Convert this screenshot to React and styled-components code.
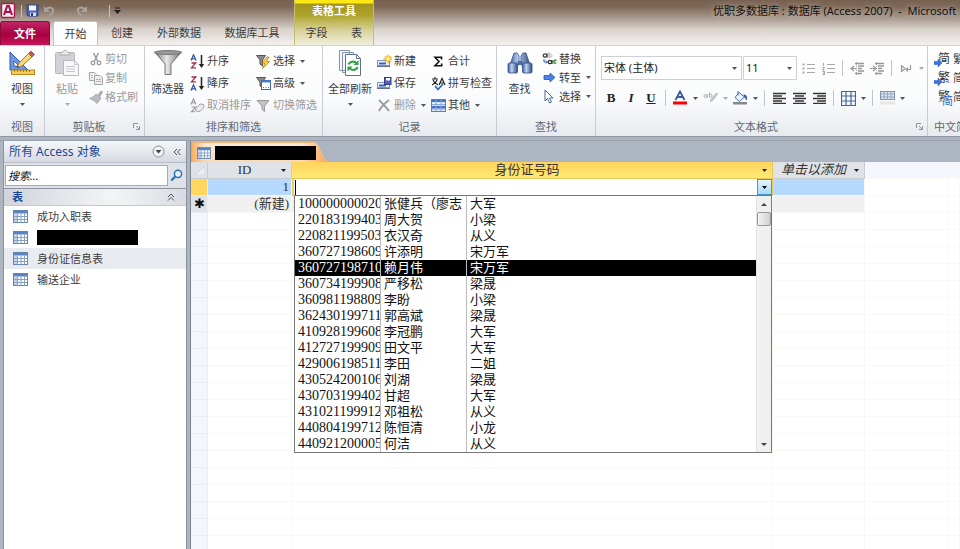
import React, { useState } from 'react';
import styled, { createGlobalStyle, css } from 'styled-components';

const uiFont = '"Noto Sans", "Noto Sans CJK SC", sans-serif';
const sheetFont = '"Liberation Serif", "Noto Sans CJK SC", serif';

const people = [
  ['100000000020', '张健兵（廖志', '大军'],
  ['220183199403', '周大贺', '小梁'],
  ['220821199503', '衣汉奇', '从义'],
  ['360727198609', '许添明', '宋万军'],
  ['360727198710', '赖月伟', '宋万军'],
  ['360734199908', '严移松', '梁晟'],
  ['360981198809', '李盼', '小梁'],
  ['362430199711', '郭高斌', '梁晟'],
  ['410928199608', '李冠鹏', '大军'],
  ['412727199909', '田文平', '大军'],
  ['429006198511', '李田', '二姐'],
  ['430524200106', '刘湖', '梁晟'],
  ['430703199402', '甘超', '大军'],
  ['431021199912', '邓祖松', '从义'],
  ['440804199712', '陈恒清', '小龙'],
  ['440921200005', '何洁', '从义'],
];

const tables = ['成功入职表', null, '身份证信息表', '输送企业'];
const emptyRows = Array.from({ length: 40 }, (_, i) => i);

/* ---------- icons ---------- */

const Icon = ({ w = 16, h = 16, box, children }) => (
  <svg width={w} height={h} viewBox={box || `0 0 ${w} ${h}`} fill="none" aria-hidden="true">
    {children}
  </svg>
);

const AccessLogo = () => (
  <Icon w={17} h={17}>
    <rect x="1.5" y="1.5" width="13" height="14" rx="1" fill="#fbe9f0" stroke="#a8194d" strokeWidth="1.4" />
    <path d="M4 13L7.2 4h1.6L12 13M5.4 10h5.2" stroke="#a30f43" strokeWidth="2" />
  </Icon>
);

const SaveIcon = () => (
  <Icon w={13} h={13}>
    <path d="M1 1h11v11H2l-1-1z" fill="#4763b8" stroke="#2d4590" />
    <rect x="3" y="1.5" width="7" height="5" fill="#f2f6ff" />
    <rect x="4" y="8.5" width="6" height="3.5" fill="#d2dbef" />
    <path d="M5 9h2v3H5z" fill="#2c3c72" />
  </Icon>
);

const UndoIcon = ({ flip }) => (
  <Icon w={12} h={12}>
    <g transform={flip ? 'translate(12 0) scale(-1 1)' : undefined}>
      <path d="M3 4.500c4-3.600 8-1.400 7 2-.4 1.600-2 3-3.500 4" stroke="#aaa29c" strokeWidth="2" />
      <path d="M1 1v6h6z" fill="#aaa29c" />
    </g>
  </Icon>
);

const Arrow = ({ color = '#555' }) => (
  <Icon w={5} h={3}>
    <path d="M0 0h5L2.500 3z" fill={color} />
  </Icon>
);

const QatMore = () => (
  <Icon w={7} h={7}>
    <path d="M1 1h5" stroke="#222" />
    <path d="M0 3h7L3.500 7z" fill="#222" />
  </Icon>
);

const DesignIcon = () => (
  <Icon w={28} h={28}>
    <path d="M2 3v18h18z" fill="#6c97dd" stroke="#2e5ba8" />
    <path d="M6 12v5h5z" fill="#fff" stroke="#2e5ba8" strokeWidth=".8" />
    <rect x="3.500" y="21" width="23" height="4.500" fill="#f3cc5c" stroke="#bb8b22" />
    <path d="M6.500 21v2M9.500 21v2M12.500 21v2M15.500 21v2M18.500 21v2M21.500 21v2" stroke="#8c6714" strokeWidth=".8" />
    <path d="M9 19l2-5L22 3l3.500 3.500L14 17z" fill="#f6d979" stroke="#a77a28" />
    <path d="M20.500 4.500L23 2l3.500 3.500-2.500 2.500z" fill="#c9574c" stroke="#666" strokeWidth=".8" />
    <path d="M9 19l.8-2.300 1.500 1.500z" fill="#333" />
  </Icon>
);

const PasteIcon = () => (
  <Icon w={26} h={28}>
    <rect x="1.500" y="3.500" width="19" height="21" rx="1" fill="#d2d2d6" stroke="#b6b6bb" />
    <path d="M6 6V3.500h2.500C9 .7 13 .7 13.500 3.500H16V6z" fill="#ececee" stroke="#aaa" />
    <path d="M9.500 11.500h11l4 4v11h-15z" fill="#f8f8fa" stroke="#b7b7c0" />
    <path d="M20.500 11.500v4h4M12 17.500h9M12 20h9M12 22.500h9" stroke="#c4c4cc" />
  </Icon>
);

const CutIcon = () => (
  <Icon w={14} h={14}>
    <path d="M4.500 1l4 8M9.500 1l-4 8" stroke="#9a9a9e" strokeWidth="1.500" />
    <circle cx="4" cy="11" r="1.800" stroke="#9a9a9e" strokeWidth="1.300" />
    <circle cx="10" cy="11" r="1.800" stroke="#9a9a9e" strokeWidth="1.300" />
  </Icon>
);

const CopyIcon = () => (
  <Icon w={14} h={14}>
    <path d="M.5 1.500h5l2 2v6h-7z" fill="#eee" stroke="#a5a5aa" />
    <path d="M5.500 4.500h5.500l2.500 2.500v6.500h-8z" fill="#eee" stroke="#a5a5aa" />
    <path d="M2 4.500h2M2 6.500h2M7 8.500h5M7 10.500h5" stroke="#b5b5ba" />
  </Icon>
);

const BrushIcon = () => (
  <Icon w={14} h={14}>
    <path d="M9 5l3-4 1.500 1L11 6.500z" fill="#b7b7ba" stroke="#999" strokeWidth=".8" />
    <path d="M7 4l5 4-4 5.500C6 11 3 9.500.5 8.500 3 8 5.500 6 7 4z" fill="#bcbcc0" stroke="#9c9ca0" strokeWidth=".8" />
  </Icon>
);

const FunnelBig = () => (
  <Icon w={30} h={28}>
    <defs>
      <linearGradient id="funnel" x1="0" x2="1">
        <stop offset="0" stopColor="#6f6f6f" />
        <stop offset=".45" stopColor="#e8e8e8" />
        <stop offset="1" stopColor="#6d6d6d" />
      </linearGradient>
    </defs>
    <path d="M1.500 3h27L18 15v10.500h-6V15z" fill="url(#funnel)" stroke="#777" />
    <ellipse cx="15" cy="3.500" rx="13.500" ry="2" fill="#999" stroke="#777" />
  </Icon>
);

const SortIcon = ({ desc }) => (
  <Icon w={15} h={15}>
    <g transform={desc ? 'translate(0 8)' : undefined}>
      <path d="M1 6.500L3.500.8 6 6.500M2 4.800h3" stroke="#3455a4" strokeWidth="1.300" />
    </g>
    <g transform={desc ? 'translate(0 -8)' : undefined}>
      <path d="M1.500 9h4.200L1.500 13.800H6" stroke="#9c3149" strokeWidth="1.300" />
    </g>
    <path d="M11.500 1v10" stroke="#222" strokeWidth="1.500" />
    <path d="M8.800 10h5.400l-2.700 4z" fill="#222" />
  </Icon>
);

const ClearSortIcon = () => (
  <Icon w={15} h={15}>
    <path d="M1 6.500L3.500.8 6 6.500M2 4.800h3M1.500 9h4.200L1.500 13.800H5" stroke="#96969a" strokeWidth="1.100" />
    <path d="M5.500 11l4.500-5 3.500.5.500 2.500-4 4.500-4-.5z" fill="#ededf0" stroke="#a3a3a8" />
  </Icon>
);

const FunnelIcon = ({ kind }) => (
  <Icon w={15} h={15}>
    <path d={kind ? 'M.5 1.500h9L6.500 6v6L4 10V6z' : 'M1 2.500h12L8.500 8v5.500L6 11.500V8z'} fill={kind ? '#8b8b8b' : '#c4c4c7'} stroke={kind ? '#555' : '#9a9a9e'} />
    {kind === 'bolt' && <path d="M11 3L6 9h3l-2.500 5.500L13.500 7.500h-3L13 3z" fill="#ffd34a" stroke="#b98413" strokeWidth=".8" />}
    {kind === 'form' && (
      <>
        <rect x="5.500" y="4.500" width="9" height="9" fill="#fff" stroke="#3b69b5" />
        <path d="M6 5.500h8" stroke="#4a7ed0" strokeWidth="2" />
        <path d="M7 11.500h1M9.500 11.500h1M12 11.500h1" stroke="#3b69b5" />
      </>
    )}
  </Icon>
);

const RefreshIcon = () => (
  <Icon w={26} h={28}>
    <path d="M2.500 1.500h10v20h-10zM5.500 3.500h11v20h-11z" fill="#f5f7fa" stroke="#8494ad" />
    <path d="M8.500 5.500h11l4 4v17h-15z" fill="#fff" stroke="#62718c" />
    <path d="M19.500 5.500v4h4" stroke="#62718c" />
    <path d="M11.500 15.500c1-3 6-4 8-1M20.500 18c-1 3.500-6 4-8 1" stroke="#35a045" strokeWidth="2.200" />
    <path d="M21.500 11v5h-5zM10.500 22.500v-5h5z" fill="#35a045" />
  </Icon>
);

const RecordIcon = ({ kind }) => (
  <Icon w={15} h={15}>
    <rect x=".5" y="6.500" width="12" height="5" fill="#eef4fd" stroke="#8194b5" />
    <path d="M2 9.500h7" stroke="#2d62c0" strokeWidth="2" />
    <path d="M0 12.500h13" stroke="#5f6d86" />
    {kind === 'new' ? (
      <>
        <path d="M11 .5v9M6.500 5h9M8 2l6 6M14 2L8 8" stroke="#efb321" strokeWidth="1.300" />
        <circle cx="11" cy="5" r="1.800" fill="#fff2a0" />
      </>
    ) : (
      <>
        <rect x="7.500" y="1.500" width="6.500" height="7" fill="#5560b5" stroke="#333e8a" />
        <rect x="9" y="2" width="4" height="2.500" fill="#fff" />
      </>
    )}
  </Icon>
);

const DeleteIcon = () => (
  <Icon w={15} h={15}>
    <path d="M2 2c3 3 7 7 10 11M12 2C8 5 4 9 2 13" stroke="#9b9b9b" strokeWidth="1.800" />
  </Icon>
);

const SumIcon = () => (
  <Icon w={15} h={15}>
    <path d="M10.500 5.500V3.200H4l4 4.300-4 4.300h6.700V9.500" stroke="#111" strokeWidth="1.600" />
  </Icon>
);

const SpellIcon = () => (
  <Icon w={15} h={15}>
    <path d="M1 3h6M4 1v2M2 4c1 3 3 4 5 5M6 4C5 7 3 8 1 9" stroke="#222" strokeWidth="1.100" />
    <path d="M8 9l3-6.500L14 9M9 7h4" stroke="#222" strokeWidth="1.200" />
    <path d="M4 10l3 3.500 5-5.500" stroke="#3265c4" strokeWidth="1.800" />
  </Icon>
);

const GridIcon = ({ w = 15, h = 13 }) => (
  <Icon w={w} h={h} box="0 0 15 13">
    <rect x=".5" y=".5" width="14" height="12" fill="#fff" stroke="#6682ae" />
    <path d="M1 1h13v2.500H1z" fill="#5a83c6" />
    <path d="M1 4h3v8H1z" fill="#c3d4ee" />
    <path d="M1 6.500h13M1 9.500h13M4.500 3.500v9M8 3.500v9M11.500 3.500v9" stroke="#86a0c8" />
  </Icon>
);

const MoreTableIcon = () => (
  <Icon w={15} h={15}>
    <rect x=".5" y="1.500" width="14" height="12" fill="#dfe9f8" stroke="#5a7fc0" />
    <path d="M1 2h13v2H1zM1 8h13v2.500H1z" fill="#3f70ce" />
    <path d="M1 6.500h13M1 11h13M5 2v11M10 2v11" stroke="#89a6d8" />
  </Icon>
);

const BinocularsIcon = () => (
  <Icon w={28} h={28}>
    <defs>
      <linearGradient id="barrel" x1="0" x2="1">
        <stop offset="0" stopColor="#3e5f9c" />
        <stop offset=".4" stopColor="#bed2f2" />
        <stop offset="1" stopColor="#2c4a85" />
      </linearGradient>
    </defs>
    <path d="M7 7l1-3h3l2 3v9H4zM21 7l-1-3h-3l-2 3v9h9z" fill="url(#barrel)" stroke="#34508a" strokeWidth=".8" />
    <rect x="2" y="14" width="9.500" height="10" rx="1.500" fill="url(#barrel)" stroke="#2f4a82" strokeWidth=".8" />
    <rect x="16.500" y="14" width="9.500" height="10" rx="1.500" fill="url(#barrel)" stroke="#2f4a82" strokeWidth=".8" />
    <path d="M11.500 12h5v4h-5z" fill="#4b6cab" />
  </Icon>
);

const ReplaceIcon = () => (
  <Icon w={15} h={15}>
    <circle cx="3" cy="4.500" r="1.700" stroke="#444" strokeWidth="1.300" />
    <path d="M5 2.500V6.500" stroke="#444" strokeWidth="1.300" />
    <path d="M7 1v5.500M7 4.500c1-2 3-1 3 .3S8 7 7 5.500" stroke="#aaa" />
    <path d="M2 8v3h3M4 9.500L5.500 11 4 12.500" stroke="#355fb5" />
    <circle cx="8" cy="11" r="1.700" stroke="#333" strokeWidth="1.300" />
    <path d="M10 9v4" stroke="#333" strokeWidth="1.300" />
    <path d="M14.500 9.500c-3-1.500-4 3-.3 3" stroke="#2d9a3a" strokeWidth="1.600" />
  </Icon>
);

const GotoIcon = () => (
  <Icon w={15} h={15}>
    <path d="M2 5.500h6V3l5 4.500L8 12V9.500H2z" fill="#4b82e8" stroke="#2b56b0" strokeWidth=".8" />
  </Icon>
);

const PointerIcon = () => (
  <Icon w={15} h={15}>
    <path d="M3 1v11l2.500-2.500 2 4.500 2-1-2-4H11z" fill="#fff" stroke="#4d6691" />
  </Icon>
);

const ListIcon = ({ numbered }) => (
  <Icon w={13} h={13}>
    <path d="M5 2.500h8M5 6.500h8M5 10.500h8" stroke="#a9a9ad" />
    {numbered
      ? <path d="M1.500 1v3M.5 5.500h2L.5 8h2M.5 9.500h2v3h-2M1 11h1" stroke="#8e8e92" strokeWidth=".8" />
      : <path d="M.5 1.500h2v2h-2zM.5 5.500h2v2h-2zM.5 9.500h2v2h-2z" fill="#a9a9ad" />}
  </Icon>
);

const IndentIcon = ({ more }) => (
  <Icon w={14} h={13}>
    <path d="M5 1.500h9M8 4h6M8 6.500h4M8 9h6M5 11.500h7" stroke="#98989c" strokeWidth="1.400" />
    <path d={more ? 'M0 6.500h5M3 4l3 2.500L3 9' : 'M7 6.500H1M4 4L1 6.500 4 9'} stroke="#98989c" strokeWidth="1.200" />
    <path d="M6.500 0v13" stroke="#aaa" strokeDasharray="1 1" />
  </Icon>
);

const DirectionIcon = () => (
  <Icon w={12} h={11}>
    <path d="M1.500 2v7M2 3l3 2.500L2 8M10.500 2v4.500H6M8 4.500L6 6.500 8 8.500" stroke="#98989c" strokeWidth="1.200" />
  </Icon>
);

const FontColorIcon = () => (
  <Icon w={14} h={16}>
    <path d="M2.500 10L7 1.500 11.500 10M4 7h6" stroke="#3a5a9c" strokeWidth="1.800" />
    <path d="M0 11.500h14v3H0z" fill="#f00" />
  </Icon>
);

const HighlightIcon = () => (
  <Icon w={15} h={14}>
    <circle cx="2.500" cy="5" r="1.500" stroke="#aaa" />
    <path d="M4.500 3.500v3M6.500 1.500v5M6.500 4c1-1.500 3-.6 2.600 1S7.200 6.800 6.500 5.500" stroke="#aaa" />
    <path d="M13.500 2l-5 6-1 2.500L10 9l4.500-6z" fill="#ccc" stroke="#aaa" strokeWidth=".8" />
  </Icon>
);

const FillIcon = () => (
  <Icon w={15} h={16}>
    <path d="M6 2.500L11.500 7l-5 4.500L2 7.500z" fill="#eef4ff" stroke="#4a6cab" />
    <path d="M5 1v4.500" stroke="#4a6cab" />
    <path d="M10.500 4.500c3 0 4 2 3.500 5.500-2 0-1.500-2.500-3-3z" fill="#3565c0" />
    <path d="M0 12h14v2.500H0z" fill="#888" />
  </Icon>
);

const AlignIcon = ({ d }) => (
  <Icon w={13} h={12}>
    <path d={d} stroke="#333" strokeWidth="1.300" />
  </Icon>
);

const BordersIcon = () => (
  <Icon w={15} h={15}>
    <path d="M.5.5h14v14H.5zM5 .5v14M10 .5v14M.5 5h14M.5 10h14" stroke="#44669f" strokeWidth="1.200" />
  </Icon>
);

const AltRowIcon = () => (
  <Icon w={15} h={14}>
    <rect x=".5" y=".5" width="14" height="8" fill="#dde6f3" stroke="#8091ad" />
    <path d="M1 3h13M1 6h13M4 1v8M7.500 1v8M11 1v8" stroke="#93a5c2" />
    <path d="M0 10.500h15v3H0z" fill="#e7e7e7" />
  </Icon>
);

const ConvertIcon = () => (
  <Icon w={8} h={8}>
    <path d="M0 2.500h4V0l4 4-4 4V5.500H0z" fill="#3f74dd" stroke="#2b56b0" strokeWidth=".5" />
  </Icon>
);

const LauncherIcon = () => (
  <Icon w={7} h={7}>
    <path d="M.5 5V.5H5M3 3l3 3M6.500 3v3.500H3" stroke="#8a93a0" />
  </Icon>
);

const SearchIcon = () => (
  <Icon w={13} h={13}>
    <circle cx="8" cy="4.800" r="3.600" fill="#eaf4ff" stroke="#2b70bb" strokeWidth="1.500" />
    <path d="M5.200 7.600L1.200 11.500" stroke="#2b70bb" strokeWidth="2.200" />
  </Icon>
);

const CircleDown = () => (
  <Icon w={13} h={13}>
    <circle cx="6.500" cy="6.500" r="5.500" fill="#f0f2f5" stroke="#8b9099" />
    <path d="M3.500 5h6l-3 3.500z" fill="#444" />
  </Icon>
);

const Chevrons = ({ up }) => (
  <Icon w={8} h={8}>
    <path d={up ? 'M1 4l3-3 3 3M1 7.500l3-3 3 3' : 'M4 1L1 4l3 3M7.500 1l-3 3 3 3'} stroke="#4a4f58" />
  </Icon>
);

const ScrollArrow = ({ up }) => (
  <Icon w={6} h={3}>
    <path d={up ? 'M0 3h6L3 0z' : 'M0 0h6L3 3z'} fill="#444" />
  </Icon>
);

const SelectAllIcon = () => (
  <Icon w={10} h={9}>
    <path d="M10 0v9H0z" fill="#eef2f7" stroke="#c3ccd8" strokeWidth=".8" />
  </Icon>
);

/* ---------- page ---------- */

const GlobalStyle = createGlobalStyle`
  * { box-sizing: border-box; }
  body {
    margin: 0;
    font: 11px/16px ${uiFont};
    color: #3c3c3c;
    overflow: hidden;
  }
  button, input, select {
    margin: 0;
    padding: 0;
    border: 0;
    background: none;
    font: inherit;
    color: inherit;
  }
  svg { display: block; flex: none; }
`;

const Window = styled.div`
  display: flex;
  flex-direction: column;
  height: 100vh;
  background: #adb5c1;
`;

const Header = styled.header`
  flex: none;
  display: grid;
  grid-template-columns: 294px 80px 1fr;
  grid-template-rows: 21px 24px;
  background: linear-gradient(#77604e 0, #7d6857 15%, #ab9d92 42%, #d9d2cd 65%, #f2f0ee 100%);
`;

const QuickAccess = styled.div`
  display: flex;
  align-items: center;
  gap: 4px;

  > svg + button, > span + button { margin-left: 0; }
`;

const QuickArrow = styled.button`
  display: flex;
  padding: 4px;
`;

const PlainButton = styled.button`
  display: flex;
  align-items: center;
`;

const Divider = styled.span`
  flex: none;
  width: 1px;
  height: ${(p) => p.$h || 12}px;
  margin: 0 ${(p) => p.$gap || 0}px;
  background: #c3c3c6;
`;

const ContextGroup = styled.div`
  grid-row: 1 / 3;
  grid-column: 2;
  display: flex;
  flex-direction: column;
  border: solid #c5bd6c;
  border-width: 0 1px;
  background: linear-gradient(#ffe816 0 3px, #a3951d 4px, #b0a42e 35%, #d5cf93 65%, #f1efdf 100%);
`;

const ContextTitle = styled.div`
  height: 21px;
  line-height: 21px;
  text-align: center;
  color: #fff;
  font-weight: bold;
`;

const Title = styled.h1`
  margin: 0 0 0 auto;
  width: 247px;
  white-space: pre;
  font-size: 11px;
  line-height: 21px;
  font-weight: normal;
  color: #111;
  text-shadow: 0 0 6px #fff9;
`;

const Tabs = styled.nav`
  display: flex;
  align-items: stretch;
  grid-row: 2;
`;

const Tab = styled.button`
  flex: none;
  width: ${(p) => p.$w}px;
  line-height: 24px;
  ${(p) => p.$kind === 'file' && css`
    margin-right: 3px;
    color: #fff;
    font-weight: bold;
    background: linear-gradient(#c02565, #a8003f 55%, #c3185b);
    border: 1px solid #8b0d3b;
    border-bottom: 0;
    border-radius: 3px 3px 0 0;
    line-height: 22px;
  `}
  ${(p) => p.$kind === 'active' && css`
    background: #fff;
    border: 1px solid #c2c2c2;
    border-bottom: 0;
    border-radius: 3px 3px 0 0;
    line-height: 22px;
  `}
`;

const Ribbon = styled.div`
  flex: none;
  display: flex;
  height: 92px;
  border-top: 1px solid #cfd2d6;
  border-bottom: 1px solid #8f969f;
  background: linear-gradient(#fff, #fafbfc 60%, #e7eaee);
  overflow: hidden;
`;

const Group = styled.section`
  flex: none;
  width: ${(p) => p.$w}px;
  display: flex;
  flex-direction: column;
  border-right: 1px solid #c8ccd2;
`;

const GroupBody = styled.div`
  flex: 1;
  display: grid;
  grid-template-columns: ${(p) => p.$cols || '1fr'};
  padding-top: 3px;
`;

const GroupLabel = styled.div`
  display: flex;
  align-items: center;
  height: 19px;
  color: #5f6874;
  white-space: nowrap;

  span {
    flex: 1;
    padding-left: ${(p) => (p.$start ? 6 : 0)}px;
    text-align: ${(p) => (p.$start ? 'left' : 'center')};
  }
  button { margin-right: 4px; }
`;

const BigButton = styled.button`
  display: flex;
  flex-direction: column;
  align-items: center;
  align-self: start;
  white-space: nowrap;
  color: ${(p) => (p.disabled ? '#9a9a9a' : 'inherit')};

  svg + span { margin: 4px 0 6px; }
`;

const Stack = styled.div`
  display: flex;
  flex-direction: column;
  padding-top: ${(p) => (p.$tight ? 0 : 1)}px;
`;

const SmallButton = styled.button`
  display: flex;
  align-items: center;
  gap: 2px;
  height: ${(p) => (p.$tight ? 19 : 22)}px;
  white-space: nowrap;
  color: ${(p) => (p.disabled ? '#9a9a9a' : 'inherit')};

  span + svg { margin-left: 3px; }
`;

const FormatRows = styled.div`
  display: flex;
  flex-direction: column;
  gap: 6px;
  padding: 7px 0 0 5px;
`;

const FormatRow = styled.div`
  display: flex;
  align-items: center;
  height: 24px;
`;

const ComboBox = styled.label`
  display: grid;
  grid-template-columns: 1fr 9px;
  align-items: center;
  width: ${(p) => p.$w}px;
  height: 24px;
  margin-right: 1px;
  border: 1px solid #cdd0d4;
  background: #fff;
  color: #222;

  select {
    appearance: none;
    grid-area: 1 / 1 / 2 / 3;
    width: 100%;
    padding-left: 2px;
    outline: 0;
  }
  svg { grid-area: 1 / 2; pointer-events: none; }
`;

const ToolButton = styled.button`
  display: flex;
  align-items: center;
  justify-content: center;
  width: ${(p) => (p.$arrow ? 10 : 20)}px;
  height: 20px;
  color: #222;
  font: ${(p) => p.$font || 'inherit'};
  text-decoration: ${(p) => (p.$underline ? 'underline' : 'none')};
`;

const ConvertButton = styled.button`
  display: flex;
  align-items: center;
  height: 19px;
  white-space: nowrap;
`;

const ConvertGlyph = styled.b`
  position: relative;
  margin-right: 3px;
  font-size: 12px;
  font-weight: normal;
  color: #333;

  svg { position: absolute; left: -4px; bottom: 0; }
  i {
    position: absolute;
    right: -3px;
    bottom: -4px;
    font-size: 11px;
    font-style: normal;
    color: #2f66cc;
    text-shadow: 0 0 1px #fff, 0 0 2px #fff;
  }
`;

const Workspace = styled.div`
  flex: 1;
  min-height: 0;
  display: flex;
  margin-top: 3px;
  padding-left: 3px;
  border-top: 1px solid #98a0ab;
`;

const NavPane = styled.aside`
  flex: none;
  width: 184px;
  border: solid #8c939e;
  border-width: 0 1px;
  background: #fff;
`;

const NavHeader = styled.div`
  display: flex;
  align-items: center;
  height: 22px;
  padding: 0 5px;
  gap: 8px;
  background: linear-gradient(#f5f7f9, #d6dae1);
  border-bottom: 1px solid #b6bcc6;

  h2 {
    flex: 1;
    margin: 0;
    font-size: 12px;
    font-weight: normal;
    color: #1e4696;
  }
`;

const SearchRow = styled.form`
  display: flex;
  align-items: center;
  gap: 2px;
  height: 26px;
  padding: 0 3px 0 1px;
  background: #dfe3e9;
  border-bottom: 1px solid #8c939e;

  input {
    flex: 1;
    min-width: 0;
    height: 21px;
    padding: 0 2px;
    border: 1px solid #a5abb5;
    background: #fff;
    font-style: italic;
  }
  input::placeholder { color: #111; }
`;

const SectionHeader = styled.button`
  display: flex;
  align-items: center;
  justify-content: space-between;
  width: 100%;
  height: 17px;
  padding: 0 11px 0 8px;
  background: linear-gradient(90deg, #d0d5dc, #f3f4f6 60%, #d8dce2);
  border-bottom: 1px solid #c3c9d1;
  color: #1e4696;
  font-weight: bold;
`;

const NavItem = styled.button`
  display: flex;
  align-items: center;
  width: 100%;
  height: 21px;
  padding-left: 9px;
  gap: 9px;
  background: ${(p) => (p.$active ? '#e8ecf0' : 'transparent')};
`;

const Blackout = styled.span`
  width: 101px;
  height: ${(p) => p.$h}px;
  background: #000;
`;

const Document = styled.main`
  flex: 1;
  min-width: 0;
  display: flex;
  flex-direction: column;
  margin-left: 3px;
  border-left: 1px solid #7d8591;
`;

const DocTabs = styled.div`
  flex: none;
  height: 21px;
  padding-left: 1px;
`;

const DocTab = styled.button`
  display: flex;
  align-items: center;
  gap: 4px;
  width: 136px;
  height: 21px;
  padding-left: 5px;
  border-top: 2px solid #f0b478;
  background: linear-gradient(90deg, #f9b163, transparent 10% 80%, #f7a95a), linear-gradient(#fdebd7, #fcd9ae);
  clip-path: polygon(0 2px, 2px 0, 122px 0, 126px 4px, 132px 17px, 136px 100%, 0 100%);
`;

const SheetScroll = styled.div`
  flex: 1;
  min-height: 0;
  overflow: hidden;
  background: #fff;
`;

const Sheet = styled.table`
  width: 100%;
  table-layout: fixed;
  border-collapse: separate;
  border-spacing: 0;
  font: 13px/16px ${sheetFont};
  color: #333;

  th, td {
    height: 17px;
    padding: 0;
    border: solid #f8f8f4;
    border-width: 0 1px 1px 0;
    font-weight: normal;
    white-space: nowrap;
  }
  tbody th { background: #f5f6fd; border-color: #ececf3; }
`;

const HeadCell = styled.th`
  background: ${(p) => (p.$active ? 'linear-gradient(#ffd35c, #ffea75)' : '#dfe3e8')};
  border-color: ${(p) => (p.$active ? '#e5c65c' : '#c8cdd3')} !important;
  font-style: ${(p) => (p.$italic ? 'italic' : 'normal')};

  div {
    display: flex;
    align-items: center;
    padding-right: 5px;
  }
  span { flex: 1; }
  > svg { margin-left: 4px; }
`;

const EmptyHead = styled.th`
  background: #f5f6fd;
`;

const Cell = styled.td`
  && { padding-right: 2px; }
  text-align: right;
  background: ${(p) => ({ selected: '#b5d9ff', fresh: '#f0f0f0' }[p.$tone] || '#fff')};
`;

const RowMark = styled.th`
  background: ${(p) => (p.$active ? '#ffd75e' : '#dfe3e8')} !important;
  color: #111;
`;

const EditCell = styled.td`
  position: relative;
  background: #fff;
  border-color: #f3cb52 !important;
`;

const EditBox = styled.div`
  display: flex;
  height: 16px;
  border-left: 2px solid #f3cb52;

  input {
    flex: 1;
    min-width: 0;
    outline: 0;
  }
`;

const Caret = styled.i`
  width: 1px;
  margin: 1px 0 0 1px;
  background: #000;
`;

const DropButton = styled.button`
  display: flex;
  align-items: center;
  justify-content: center;
  width: 15px;
  border: 1px solid #4b95c4;
  background: linear-gradient(#e4f4fd, #a5dcf8);
`;

const Popup = styled.div`
  position: absolute;
  z-index: 1;
  top: 16px;
  left: 2px;
  right: 0;
  display: flex;
  border: 1px solid #777;
  background: #fff;
`;

const PickArea = styled.div`
  flex: 1;
  min-width: 0;
`;

const PickList = styled.table`
  width: 100%;
  table-layout: fixed;
  border-collapse: separate;
  border-spacing: 0;

  && td {
    height: 16px;
    padding-left: 3px;
    border: 0;
    line-height: 16px;
    overflow: hidden;
  }
  && td + td { border-left: 1px solid #bbb; }
  && td:first-child { font-size: 14px; }
`;

const PickRow = styled.tr`
  cursor: default;
  background: ${(p) => (p.$active ? '#000' : '#fff')};
  color: ${(p) => (p.$active ? '#fff' : '#111')};
`;

const ScrollBar = styled.div`
  flex: none;
  display: flex;
  flex-direction: column;
  width: 15px;
  background: #f0f0f0;
  border-left: 1px solid #e3e3e3;

  button {
    display: flex;
    align-items: center;
    justify-content: center;
    height: 16px;
  }
`;

const Thumb = styled.div`
  height: 14px;
  margin-bottom: auto;
  border: 1px solid #989898;
  border-radius: 2px;
  background: linear-gradient(90deg, #f5f5f5, #cfcfcf);
`;

const Small = ({ icon, label, arrow, disabled, tight }) => (
  <SmallButton disabled={disabled} $tight={tight}>
    {icon}
    <span>{label}</span>
    {arrow && <Arrow />}
  </SmallButton>
);

const RibbonGroup = ({ width, label, cols, launcher, start, children }) => (
  <Group $w={width}>
    <GroupBody $cols={cols}>{children}</GroupBody>
    <GroupLabel $start={start}>
      <span>{label}</span>
      {launcher && <PlainButton aria-label={label}><LauncherIcon /></PlainButton>}
    </GroupLabel>
  </Group>
);

const App = () => {
  const [picked, setPicked] = useState(4);
  const [current, setCurrent] = useState(2);

  return (
    <Window>
      <GlobalStyle />
      <Header>
        <QuickAccess>
          <AccessLogo />
          <Divider />
          <PlainButton aria-label="保存"><SaveIcon /></PlainButton>
          <PlainButton aria-label="撤消"><UndoIcon /></PlainButton>
          <QuickArrow aria-label="撤消列表"><Arrow color="#7b726b" /></QuickArrow>
          <PlainButton aria-label="恢复"><UndoIcon flip /></PlainButton>
          <QuickArrow aria-label="恢复列表"><Arrow color="#7b726b" /></QuickArrow>
          <Divider />
          <PlainButton aria-label="自定义"><QatMore /></PlainButton>
        </QuickAccess>
        <ContextGroup>
          <ContextTitle>表格工具</ContextTitle>
          <Tabs>
            <Tab $w={43}>字段</Tab>
            <Tab $w={37}>表</Tab>
          </Tabs>
        </ContextGroup>
        <Title>{'优职多数据库 : 数据库 (Access 2007)  -  Microsoft'}</Title>
        <Tabs>
          <Tab $w={50} $kind="file">文件</Tab>
          <Tab $w={45} $kind="active">开始</Tab>
          <Tab $w={48}>创建</Tab>
          <Tab $w={66}>外部数据</Tab>
          <Tab $w={80}>数据库工具</Tab>
        </Tabs>
      </Header>

      <Ribbon>
        <RibbonGroup width={45} label="视图">
          <BigButton><DesignIcon /><span>视图</span><Arrow /></BigButton>
        </RibbonGroup>

        <RibbonGroup width={100} label="剪贴板" cols="44px 1fr" launcher>
          <BigButton disabled><PasteIcon /><span>粘贴</span><Arrow color="#aaa" /></BigButton>
          <Stack $tight>
            <Small tight disabled icon={<CutIcon />} label="剪切" />
            <Small tight disabled icon={<CopyIcon />} label="复制" />
            <Small tight disabled icon={<BrushIcon />} label="格式刷" />
          </Stack>
        </RibbonGroup>

        <RibbonGroup width={178} label="排序和筛选" cols="45px 66px 1fr">
          <BigButton><FunnelBig /><span>筛选器</span></BigButton>
          <Stack>
            <Small icon={<SortIcon />} label="升序" />
            <Small icon={<SortIcon desc />} label="降序" />
            <Small disabled icon={<ClearSortIcon />} label="取消排序" />
          </Stack>
          <Stack>
            <Small icon={<FunnelIcon kind="bolt" />} label="选择" arrow />
            <Small icon={<FunnelIcon kind="form" />} label="高级" arrow />
            <Small disabled icon={<FunnelIcon />} label="切换筛选" />
          </Stack>
        </RibbonGroup>

        <RibbonGroup width={174} label="记录" cols="54px 54px 1fr">
          <BigButton><RefreshIcon /><span>全部刷新</span><Arrow /></BigButton>
          <Stack>
            <Small icon={<RecordIcon kind="new" />} label="新建" />
            <Small icon={<RecordIcon />} label="保存" />
            <Small disabled icon={<DeleteIcon />} label="删除" arrow />
          </Stack>
          <Stack>
            <Small icon={<SumIcon />} label="合计" />
            <Small icon={<SpellIcon />} label="拼写检查" />
            <Small icon={<MoreTableIcon />} label="其他" arrow />
          </Stack>
        </RibbonGroup>

        <RibbonGroup width={99} label="查找" cols="45px 1fr">
          <BigButton><BinocularsIcon /><span>查找</span></BigButton>
          <Stack $tight>
            <Small tight icon={<ReplaceIcon />} label="替换" />
            <Small tight icon={<GotoIcon />} label="转至" arrow />
            <Small tight icon={<PointerIcon />} label="选择" arrow />
          </Stack>
        </RibbonGroup>

        <RibbonGroup width={332} label="文本格式" launcher>
          <FormatRows>
            <FormatRow>
              <ComboBox $w={141}>
                <select aria-label="字体"><option>宋体 (主体)</option></select>
                <Arrow />
              </ComboBox>
              <ComboBox $w={54}>
                <select aria-label="字号"><option>11</option></select>
                <Arrow />
              </ComboBox>
              <ToolButton aria-label="项目符号"><ListIcon /></ToolButton>
              <ToolButton aria-label="编号"><ListIcon numbered /></ToolButton>
              <Divider $h={16} $gap={4} />
              <ToolButton aria-label="减少缩进"><IndentIcon /></ToolButton>
              <ToolButton aria-label="增加缩进"><IndentIcon more /></ToolButton>
              <Divider $h={16} $gap={4} />
              <ToolButton aria-label="文字方向"><DirectionIcon /></ToolButton>
              <ToolButton $arrow aria-label="文字方向选项"><Arrow color="#aaa" /></ToolButton>
            </FormatRow>
            <FormatRow>
              <ToolButton $font='bold 13px "Liberation Serif", serif'>B</ToolButton>
              <ToolButton $font='italic bold 13px "Liberation Serif", serif'>I</ToolButton>
              <ToolButton $underline $font='bold 13px "Liberation Serif", serif'>U</ToolButton>
              <Divider $h={16} $gap={4} />
              <ToolButton aria-label="字体颜色"><FontColorIcon /></ToolButton>
              <ToolButton $arrow aria-label="字体颜色选项"><Arrow /></ToolButton>
              <ToolButton aria-label="突出显示"><HighlightIcon /></ToolButton>
              <ToolButton $arrow aria-label="突出显示选项"><Arrow color="#aaa" /></ToolButton>
              <ToolButton aria-label="背景色"><FillIcon /></ToolButton>
              <ToolButton $arrow aria-label="背景色选项"><Arrow /></ToolButton>
              <Divider $h={16} $gap={4} />
              <ToolButton aria-label="左对齐"><AlignIcon d="M0 1.500h13M0 4h9M0 6.500h13M0 9h9M0 11.500h13" /></ToolButton>
              <ToolButton aria-label="居中"><AlignIcon d="M0 1.500h13M2 4h9M0 6.500h13M2 9h9M0 11.500h13" /></ToolButton>
              <ToolButton aria-label="右对齐"><AlignIcon d="M0 1.500h13M4 4h9M0 6.500h13M4 9h9M0 11.500h13" /></ToolButton>
              <Divider $h={16} $gap={4} />
              <ToolButton aria-label="网格线"><BordersIcon /></ToolButton>
              <ToolButton $arrow aria-label="网格线选项"><Arrow /></ToolButton>
              <Divider $h={16} $gap={4} />
              <ToolButton aria-label="可选行颜色"><AltRowIcon /></ToolButton>
              <ToolButton $arrow aria-label="可选行颜色选项"><Arrow /></ToolButton>
            </FormatRow>
          </FormatRows>
        </RibbonGroup>

        <RibbonGroup width={120} label="中文简繁转换" cols="10px 1fr" start>
          <span />
          <Stack $tight>
            <ConvertButton><ConvertGlyph>简<ConvertIcon /></ConvertGlyph>繁转简</ConvertButton>
            <ConvertButton><ConvertGlyph>繁<ConvertIcon /></ConvertGlyph>简转繁</ConvertButton>
            <ConvertButton><ConvertGlyph>繁<i>简</i></ConvertGlyph>简繁转换</ConvertButton>
          </Stack>
        </RibbonGroup>
      </Ribbon>

      <Workspace>
        <NavPane>
          <NavHeader>
            <h2>所有 Access 对象</h2>
            <PlainButton aria-label="筛选对象"><CircleDown /></PlainButton>
            <PlainButton aria-label="折叠"><Chevrons /></PlainButton>
          </NavHeader>
          <SearchRow onSubmit={(e) => e.preventDefault()}>
            <input aria-label="搜索" placeholder="搜索..." />
            <PlainButton aria-label="搜索"><SearchIcon /></PlainButton>
          </SearchRow>
          <SectionHeader>表<Chevrons up /></SectionHeader>
          {tables.map((name, i) => (
            <NavItem key={i} $active={i === current} onClick={() => setCurrent(i)}>
              <GridIcon w={15} h={13} />
              {name || <Blackout $h={15} />}
            </NavItem>
          ))}
        </NavPane>

        <Document>
          <DocTabs>
            <DocTab><GridIcon w={14} h={12} /><Blackout $h={14} /></DocTab>
          </DocTabs>
          <SheetScroll>
            <Sheet>
              <colgroup>
                <col width="17" />
                <col width="84" />
                <col width="481" />
                <col width="92" />
                <col width="84" />
                <col />
              </colgroup>
              <thead>
                <tr>
                  <HeadCell><SelectAllIcon /></HeadCell>
                  <HeadCell><div><span>ID</span><Arrow color="#222" /></div></HeadCell>
                  <HeadCell $active><div><span>身份证号码</span><Arrow color="#222" /></div></HeadCell>
                  <HeadCell $italic><div><span>单击以添加</span><Arrow color="#222" /></div></HeadCell>
                  <EmptyHead />
                  <EmptyHead />
                </tr>
              </thead>
              <tbody>
                <tr>
                  <RowMark $active />
                  <Cell $tone="selected">1</Cell>
                  <EditCell>
                    <EditBox>
                      <Caret />
                      <input aria-label="身份证号码" />
                      <DropButton aria-label="展开"><Arrow color="#000" /></DropButton>
                    </EditBox>
                    <Popup>
                      <PickArea>
                        <PickList>
                          <colgroup>
                            <col width="85" />
                            <col width="86" />
                            <col />
                          </colgroup>
                          <tbody>
                            {people.map((person, i) => (
                              <PickRow key={person[0]} $active={i === picked} onClick={() => setPicked(i)}>
                                {person.map((text, n) => <td key={n}>{text}</td>)}
                              </PickRow>
                            ))}
                          </tbody>
                        </PickList>
                      </PickArea>
                      <ScrollBar>
                        <button aria-label="向上"><ScrollArrow up /></button>
                        <Thumb />
                        <button aria-label="向下"><ScrollArrow /></button>
                      </ScrollBar>
                    </Popup>
                  </EditCell>
                  <Cell $tone="selected" />
                  <Cell />
                  <Cell />
                </tr>
                <tr>
                  <RowMark>✱</RowMark>
                  <Cell $tone="fresh">(新建)</Cell>
                  <Cell $tone="fresh" />
                  <Cell $tone="fresh" />
                  <Cell />
                  <Cell />
                </tr>
                {emptyRows.map((n) => (
                  <tr key={n}>
                    <th /><Cell /><Cell /><Cell /><Cell /><Cell />
                  </tr>
                ))}
              </tbody>
            </Sheet>
          </SheetScroll>
        </Document>
      </Workspace>
    </Window>
  );
};

export default App;
